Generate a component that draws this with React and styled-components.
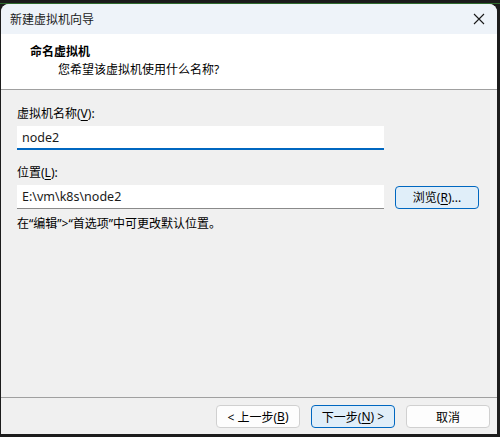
import React from "react";
import styled, { createGlobalStyle } from "styled-components";

const GlobalStyle = createGlobalStyle`
  html, body {
    margin: 0;
    padding: 0;
    background: #1c1c1c;
  }
  body {
    font-family: "Noto Sans", "Noto Sans CJK SC", sans-serif;
    font-size: 12px;
    color: #000;
  }
`;

const Screen = styled.div`
  width: 500px;
  height: 437px;
  padding: 3px 3px 3px 1px;
  box-sizing: border-box;
  border-top: 1px solid #1a1a1a;
  box-shadow: inset 0 2px 0 #1c1c1c, inset 0 3px 0 #2f6b2f;
`;

const Window = styled.div`
  width: 496px;
  height: 430px;
  display: flex;
  flex-direction: column;
  background: #f0f0f0;
  border-radius: 8px 8px 0 0;
  overflow: hidden;
`;

const TitleBar = styled.div`
  height: 30px;
  display: flex;
  align-items: center;
  justify-content: space-between;
  padding: 0 9px;
  background: #eef3f9;
  flex-shrink: 0;
`;

const Title = styled.span`
  font-size: 12px;
  color: #1a1a1a;
`;

const Close = styled.button`
  width: 28px;
  height: 26px;
  margin-right: -5px;
  border: none;
  background: transparent;
  display: flex;
  align-items: center;
  justify-content: center;
  padding: 0;
`;

const Header = styled.div`
  height: 56px;
  background: #fff;
  border-bottom: 1px solid #a0a0a0;
  padding: 9px 0 0 29px;
  box-sizing: border-box;
  flex-shrink: 0;
`;

const HeaderTitle = styled.div`
  font-weight: 700;
  font-size: 12px;
  line-height: 17px;
`;

const HeaderText = styled.div`
  padding-left: 28px;
  line-height: 19px;
`;

const Body = styled.div`
  flex: 1;
  padding: 15px 16px 0 16px;
  display: flex;
  flex-direction: column;
`;

const Label = styled.div`
  line-height: 17px;
  margin-top: ${(p) => p.$top || 0}px;
`;

const Key = styled.span`
  text-decoration: underline;
  text-underline-offset: 2px;
`;

const Row = styled.div`
  display: flex;
  align-items: center;
  gap: 11px;
  margin-top: ${(p) => p.$top || 0}px;
`;

const Field = styled.div`
  width: 367px;
  height: 24px;
  box-sizing: border-box;
  background: #fff;
  border-bottom: ${(p) => (p.$focus ? "2px solid #0067c0" : "1px solid #8a8a8a")};
  padding: 0 0 0 5px;
  display: flex;
  align-items: center;
  font-size: 12.5px;
  color: #1a1a1a;
`;

const Button = styled.button`
  width: 84px;
  height: 23px;
  box-sizing: border-box;
  border-radius: 4px;
  border: 1px solid ${(p) => (p.$accent ? "#0067c0" : "#d0d0d0")};
  background: ${(p) => (p.$accent ? "#e0eef9" : "#fdfdfd")};
  font-family: inherit;
  font-size: 12px;
  color: #000;
  padding: 0;
  display: flex;
  align-items: center;
  justify-content: center;
`;

const Hint = styled.div`
  margin-top: 6px;
  line-height: 17px;
`;

const Footer = styled.div`
  height: 37px;
  border-top: 1px solid #a0a0a0;
  display: flex;
  justify-content: flex-end;
  align-items: flex-start;
  gap: 11px;
  padding: 7px 7px 0 0;
  box-sizing: border-box;
  flex-shrink: 0;
`;

export default function App() {
  return (
    <>
      <GlobalStyle />
      <Screen>
        <Window>
          <TitleBar>
            <Title>新建虚拟机向导</Title>
            <Close aria-label="关闭">
              <svg width="12" height="12" viewBox="0 0 12 12">
                <path d="M1 1 L11 11 M11 1 L1 11" stroke="#1a1a1a" strokeWidth="1.1" />
              </svg>
            </Close>
          </TitleBar>
          <Header>
            <HeaderTitle>命名虚拟机</HeaderTitle>
            <HeaderText>您希望该虚拟机使用什么名称?</HeaderText>
          </Header>
          <Body>
            <Label>
              虚拟机名称(<Key>V</Key>):
            </Label>
            <Row $top={4}>
              <Field $focus>node2</Field>
            </Row>
            <Label $top={14}>
              位置(<Key>L</Key>):
            </Label>
            <Row $top={4}>
              <Field>E:\vm\k8s\node2</Field>
              <Button $accent>
                浏览(<Key>R</Key>)...
              </Button>
            </Row>
            <Hint>在“编辑”&gt;“首选项”中可更改默认位置。</Hint>
          </Body>
          <Footer>
            <Button>
              &lt; 上一步(<Key>B</Key>)
            </Button>
            <Button $accent>
              下一步(<Key>N</Key>) &gt;
            </Button>
            <Button>取消</Button>
          </Footer>
        </Window>
      </Screen>
    </>
  );
}
